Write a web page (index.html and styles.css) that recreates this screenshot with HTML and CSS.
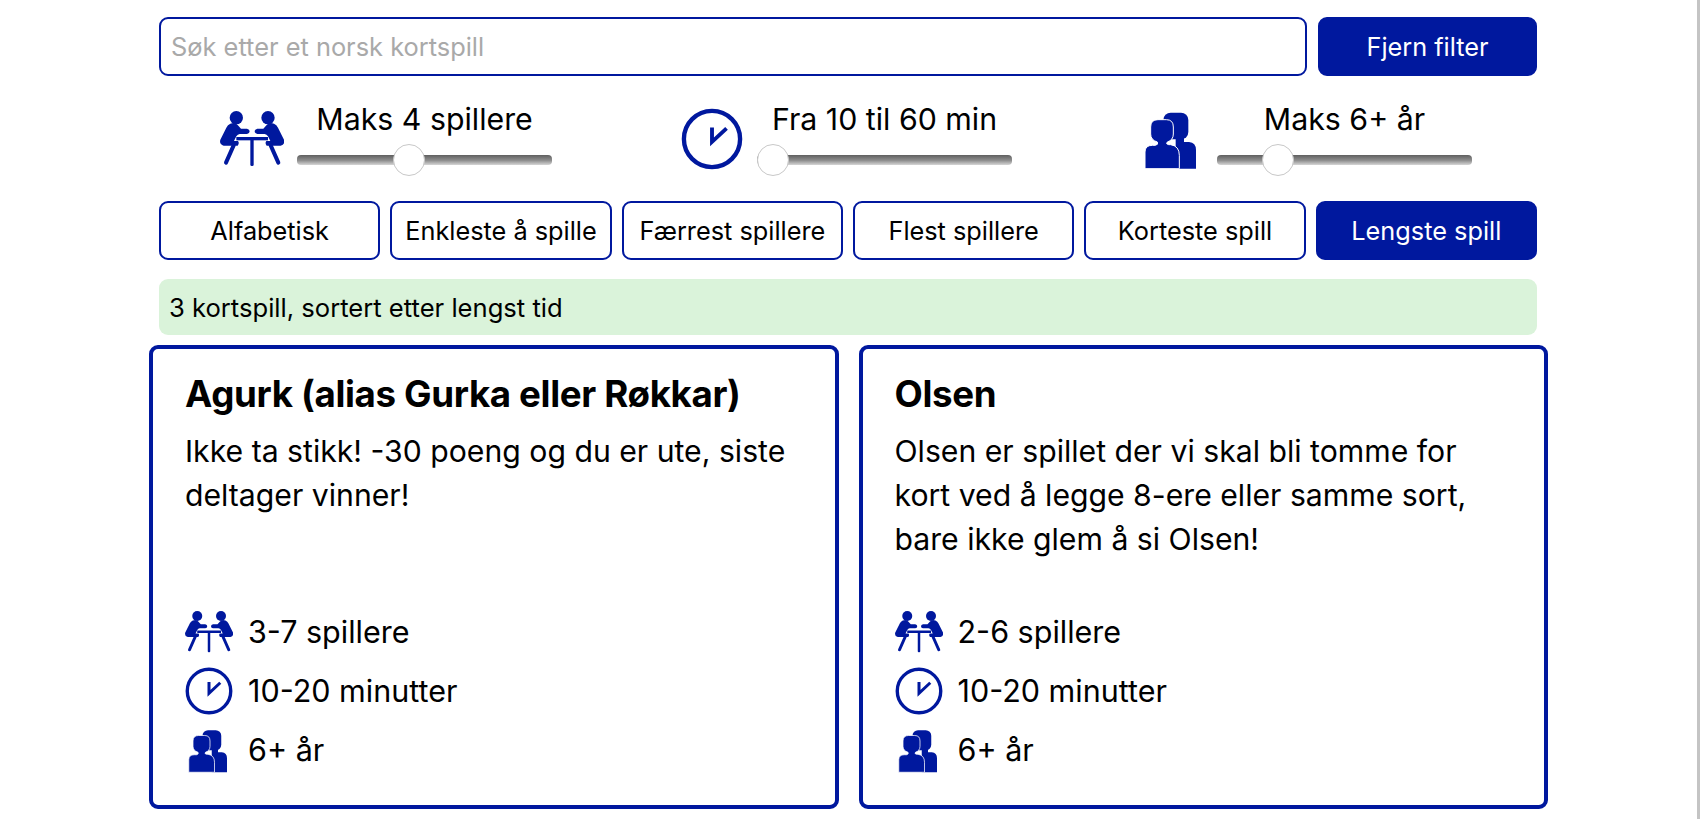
FILE: index.html
```html
<!DOCTYPE html>
<html lang="no">
<head>
<meta charset="utf-8">
<title>Norske kortspill</title>
<link rel="stylesheet" href="styles.css">
</head>
<body>
<svg class="defs" width="0" height="0" aria-hidden="true">
  <defs>
    <symbol id="i-players" viewBox="31 9 192 186">
      <circle cx="80" cy="38" r="20"/>
      <path d="M62 56 Q76 50 84 60 L94 71 H112 Q120 73 120 79 Q120 86 112 87 H90 Q84 88 80 94 L73 108 H85 Q90 115 84 122 H42 Q28 118 32 104 L50 68 Q54 59 62 56 Z"/>
      <path d="M72 121 L49 173" fill="none" stroke="currentColor" stroke-width="12" stroke-linecap="round"/>
      <g transform="translate(255 0) scale(-1 1)">
        <circle cx="80" cy="38" r="20"/>
        <path d="M62 56 Q76 50 84 60 L94 71 H112 Q120 73 120 79 Q120 86 112 87 H90 Q84 88 80 94 L73 108 H85 Q90 115 84 122 H42 Q28 118 32 104 L50 68 Q54 59 62 56 Z"/>
        <path d="M72 121 L49 173" fill="none" stroke="currentColor" stroke-width="12" stroke-linecap="round"/>
      </g>
      <rect x="80" y="96" width="95" height="10"/>
      <rect x="122" y="100" width="10" height="83" rx="4"/>
    </symbol>
    <symbol id="i-clock" viewBox="0 0 64 64">
      <circle cx="32" cy="32" r="29" fill="none" stroke="currentColor" stroke-width="4.5"/>
      <path d="M32 20 V35 L47 21" fill="none" stroke="currentColor" stroke-width="4"/>
    </symbol>
    <symbol id="i-age" viewBox="18 10 192 186">
      <rect x="88" y="24" width="75" height="80" rx="22"/>
      <path d="M125 95 H150 V112 H165 Q186 114 186 136 V192 H125 Z"/>
      <path d="M50 67 Q50 45 72 45 H97 Q118 45 118 67 V88 Q118 106 100 112 Q94 118 104 120 H110 Q136 124 136 152 V192 H33 V142 Q33 122 55 122 H64 Q74 120 70 112 Q50 106 50 88 Z" stroke="#fff" stroke-width="3"/>
    </symbol>
  </defs>
</svg>

<main class="page">
  <section class="search-row">
    <input class="search" type="text" placeholder="Søk etter et norsk kortspill">
    <button class="btn btn-solid clear">Fjern filter</button>
  </section>

  <section class="filters">
    <div class="filter">
      <svg class="filter-icon"><use href="#i-players"/></svg>
      <div class="filter-control">
        <label class="filter-label">Maks 4 spillere</label>
        <input class="slider" type="range" min="1" max="8" value="4">
      </div>
    </div>
    <div class="filter">
      <svg class="filter-icon"><use href="#i-clock"/></svg>
      <div class="filter-control">
        <label class="filter-label">Fra 10 til 60 min</label>
        <input class="slider" type="range" min="0" max="100" value="0">
      </div>
    </div>
    <div class="filter">
      <svg class="filter-icon"><use href="#i-age"/></svg>
      <div class="filter-control">
        <label class="filter-label">Maks 6+ år</label>
        <input class="slider" type="range" min="0" max="30" value="6">
      </div>
    </div>
  </section>

  <section class="sort-row">
    <button class="btn">Alfabetisk</button>
    <button class="btn">Enkleste å spille</button>
    <button class="btn">Færrest spillere</button>
    <button class="btn">Flest spillere</button>
    <button class="btn">Korteste spill</button>
    <button class="btn btn-solid">Lengste spill</button>
  </section>

  <p class="status">3 kortspill, sortert etter lengst tid</p>

  <section class="cards">
    <article class="card">
      <h2 class="card-title">Agurk (alias Gurka eller Røkkar)</h2>
      <p class="card-text">Ikke ta stikk! -30 poeng og du er ute, siste deltager vinner!</p>
      <ul class="meta">
        <li class="meta-item"><svg class="meta-icon"><use href="#i-players"/></svg>3-7 spillere</li>
        <li class="meta-item"><svg class="meta-icon"><use href="#i-clock"/></svg>10-20 minutter</li>
        <li class="meta-item"><svg class="meta-icon"><use href="#i-age"/></svg>6+ år</li>
      </ul>
    </article>
    <article class="card">
      <h2 class="card-title">Olsen</h2>
      <p class="card-text">Olsen er spillet der vi skal bli tomme for kort ved å legge 8-ere eller samme sort, bare ikke glem å si Olsen!</p>
      <ul class="meta">
        <li class="meta-item"><svg class="meta-icon"><use href="#i-players"/></svg>2-6 spillere</li>
        <li class="meta-item"><svg class="meta-icon"><use href="#i-clock"/></svg>10-20 minutter</li>
        <li class="meta-item"><svg class="meta-icon"><use href="#i-age"/></svg>6+ år</li>
      </ul>
    </article>
  </section>
</main>
</body>
</html>
```

FILE: styles.css
```css
* { box-sizing: border-box; }

html, body {
  margin: 0;
  height: 100%;
  overflow: hidden;
  background: #fff;
}

body {
  font-family: Inter, "Noto Sans", "Liberation Sans", sans-serif;
  color: #000;
  border-right: 3px solid #c4c4c4;
}

.defs { position: absolute; }

.page {
  width: 1399px;
  margin: 0 auto;
  padding-top: 17px;
  fill: #00189e;
  color: #00189e;
}

.search-row,
.sort-row,
.status {
  margin-left: 10px;
  margin-right: 11px;
}

.search-row {
  display: flex;
  gap: 11px;
}

.search {
  flex: 1;
  min-width: 0;
  height: 59px;
  padding: 0 10px;
  border: 2px solid #00189e;
  border-radius: 9px;
  font: 25.4px Inter, sans-serif;
  outline: none;
}
.search::placeholder { color: #a9a9a9; opacity: 1; }

.btn {
  flex: 1 1 0;
  height: 59px;
  padding: 0;
  background: #fff;
  color: #000;
  border: 2px solid #00189e;
  border-radius: 9px;
  font: 25.3px Inter, sans-serif;
}
.btn-solid {
  background: #00189e;
  color: #fff;
}
.clear { flex: 0 0 219px; }

.filters {
  display: grid;
  grid-template-columns: repeat(3, 460px);
  height: 125px;
  margin-left: 7px;
}

.filter {
  display: flex;
  justify-content: center;
  align-items: flex-end;
  gap: 13px;
  padding-bottom: 25px;
}

.filter-icon {
  flex: none;
  width: 64px;
  height: 62px;
  margin-bottom: 6px;
}

.filter-control {
  width: 255px;
  display: flex;
  flex-direction: column;
  align-items: center;
}

.filter-label {
  color: #000;
  font-size: 30.3px;
  line-height: 34px;
  margin-bottom: 8px;
}

.slider {
  -webkit-appearance: none;
  appearance: none;
  display: block;
  width: 100%;
  height: 32px;
  margin: 0;
  background: transparent;
}
.slider::-webkit-slider-runnable-track {
  height: 10px;
  border-radius: 4px;
  background: linear-gradient(#5f5f5f, #8f8f8f 55%, #d6d6d6);
}
.slider::-webkit-slider-thumb {
  -webkit-appearance: none;
  width: 32px;
  height: 32px;
  margin-top: -11px;
  border-radius: 50%;
  background: #fff;
  border: 1px solid #c8c8c8;
}

.sort-row {
  display: flex;
  gap: 10px;
}

.status {
  height: 56px;
  margin-top: 19px;
  margin-bottom: 10px;
  padding: 0 10px;
  display: flex;
  align-items: center;
  background: #daf3da;
  border-radius: 9px;
  color: #000;
  font-size: 25.6px;
}

.cards {
  display: grid;
  grid-template-columns: 1fr 1fr;
  gap: 20px;
}

.card {
  height: 464px;
  padding: 23px 32px 0;
  border: 4px solid #00189e;
  border-radius: 9px;
  display: flex;
  flex-direction: column;
  color: #000;
}

.card-title {
  margin: 0;
  font-size: 36.7px;
  line-height: 44px;
  font-weight: 700;
  letter-spacing: -0.35px;
}

.card-text {
  margin: 13px 0 0;
  font-size: 30.2px;
  line-height: 44px;
}

.meta {
  list-style: none;
  margin: auto 0 0;
  padding: 0 0 26px;
}

.meta-item {
  display: flex;
  align-items: center;
  gap: 15px;
  height: 59px;
  font-size: 30.5px;
}

.meta-icon {
  flex: none;
  width: 48px;
  height: 48px;
  color: #00189e;
  fill: #00189e;
}
```
